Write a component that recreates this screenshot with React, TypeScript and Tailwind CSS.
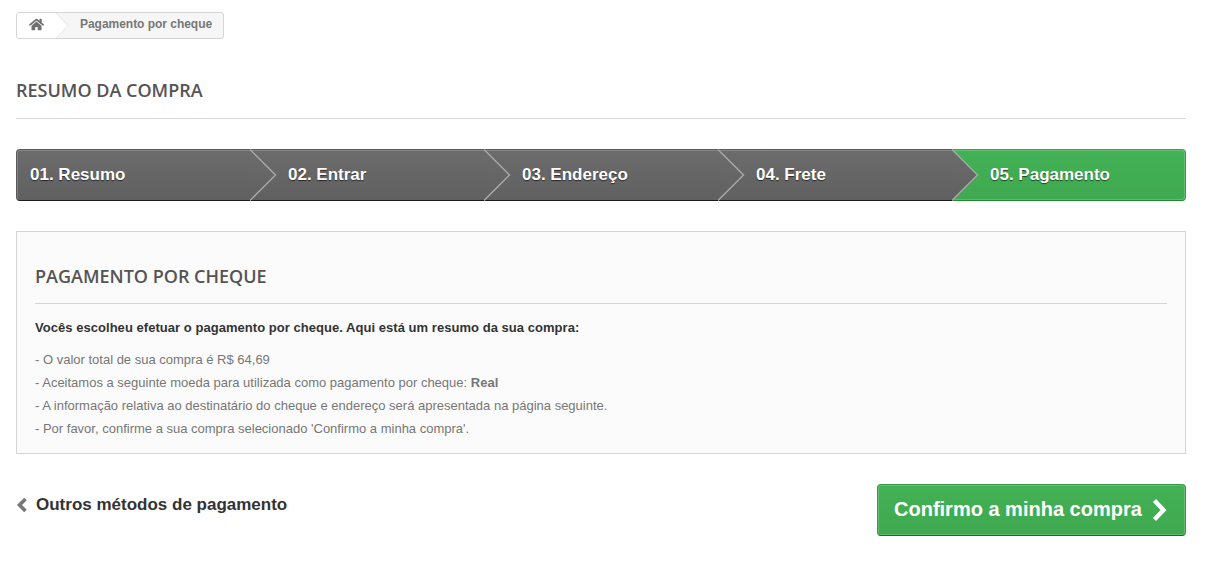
import { FaHome } from "react-icons/fa";

const steps = ["01. Resumo", "02. Entrar", "03. Endereço", "04. Frete", "05. Pagamento"];

function Chevron({ id }: { id: string }) {
  return (
    <svg className="absolute top-0 -right-[27px] z-10" width="27" height="52" viewBox="0 0 27 52">
      <defs>
        <linearGradient id={id} x1="0" y1="0" x2="0" y2="1">
          <stop offset="0" stopColor="#6c6c6c" />
          <stop offset="1" stopColor="#606060" />
        </linearGradient>
      </defs>
      <path d="M0 0 L26 26 L0 52 Z" fill={`url(#${id})`} />
      <path d="M0 0.5 L25.5 26 L0 51.5" fill="none" stroke="#a9a9a9" strokeWidth="1.4" />
    </svg>
  );
}

export default function App() {
  return (
    <div className="h-[562px] w-[1218px] overflow-hidden bg-white pl-4 pr-8 pt-3 font-['Liberation_Sans',Arial,sans-serif]">
      {/* breadcrumb */}
      <div className="relative flex h-[27px] w-[208px] items-center overflow-hidden rounded-[3px] border border-[#d6d4d4] bg-[#f6f6f6] text-xs font-bold text-[#777777]">
        <div className="flex h-full w-[39px] items-center justify-center bg-white pb-[3px] text-[#6f6f6f]">
          <FaHome className="text-[15px]" />
        </div>
        <svg className="absolute left-[38px] top-0" width="16" height="25" viewBox="0 0 16 25">
          <path d="M0 -1 L13 12.5 L0 26 Z" fill="#ffffff" />
          <path d="M0 -1 L13 12.5 L0 26" fill="none" stroke="#e6e6e6" strokeWidth="1" />
        </svg>
        <span className="pb-[3px] pl-[24px] tracking-[-0.03px]">Pagamento por cheque</span>
      </div>

      <h1 className="mt-[39px] border-b border-[#d6d4d4] pb-[16px] font-['Open_Sans',sans-serif] text-lg leading-[24px] font-semibold text-[#555454] uppercase">
        Resumo da compra
      </h1>

      {/* steps */}
      <div className="mt-[30px] flex h-[52px]">
        {steps.map((step, i) => (
          <div
            key={step}
            className={
              i === 4
                ? "relative flex w-[234px] items-center rounded-r-[4px] border-t border-r border-b border-t-[#3f9f4e] border-r-[#3d9a4b] border-b-[#1f8a30] bg-gradient-to-b from-[#43b155] to-[#3fa950] pb-[2px] pl-[38px] shadow-[inset_0_1px_0_rgba(255,255,255,0.18),inset_-1px_0_0_rgba(255,255,255,0.18),inset_0_-1px_0_rgba(255,255,255,0.18)]"
                : i === 0
                  ? "relative flex w-[234px] items-center rounded-l-[4px] border-t border-l border-b border-t-[#5a5a5a] border-l-[#5a5a5a] border-b-[#1c1c1c] bg-gradient-to-b from-[#6c6c6c] to-[#606060] pb-[2px] pl-[13px] shadow-[inset_0_1px_0_rgba(255,255,255,0.18),inset_1px_0_0_rgba(255,255,255,0.18)]"
                  : "relative flex w-[234px] items-center border-t border-b border-t-[#5a5a5a] border-b-[#1c1c1c] bg-gradient-to-b from-[#6c6c6c] to-[#606060] pb-[2px] pl-[38px] shadow-[inset_0_1px_0_rgba(255,255,255,0.18)]"
            }
          >
            <span className="text-[17px] leading-none font-bold text-white [text-shadow:0_1px_1px_rgba(0,0,0,0.6)]">
              {step}
            </span>
            {i < 4 && (
              <div className="absolute -top-px right-0">
                <Chevron id={`step-fill-${i}`} />
              </div>
            )}
          </div>
        ))}
      </div>

      {/* panel */}
      <div className="mt-[30px] h-[223px] border border-[#d6d4d4] bg-[#fbfbfb] px-[18px] pt-[31px]">
        <h2 className="border-b border-[#d6d4d4] pb-[14px] font-['Open_Sans',sans-serif] text-lg leading-[26px] font-semibold text-[#555454] uppercase">
          Pagamento por cheque
        </h2>
        <p className="mt-[14px] text-[13px] leading-[19px] font-bold tracking-[0.04px] text-[#333333]">
          Vocês escolheu efetuar o pagamento por cheque. Aqui está um resumo da sua compra:
        </p>
        <div className="mt-[11px] text-[13px] leading-[23px] text-[#777777]">
          <p>- O valor total de sua compra é R$ 64,69</p>
          <p>
            - Aceitamos a seguinte moeda para utilizada como pagamento por cheque: <b>Real</b>
          </p>
          <p>- A informação relativa ao destinatário do cheque e endereço será apresentada na página seguinte.</p>
          <p>- Por favor, confirme a sua compra selecionado 'Confirmo a minha compra'.</p>
        </div>
      </div>

      {/* actions */}
      <div className="mt-[30px] flex items-start justify-between">
        <a className="mt-[10px] flex items-center text-[17px] leading-[22px] font-bold text-[#333333]">
          <svg className="mr-[8px]" width="12" height="16" viewBox="0 0 12 16">
            <path d="M9.5 2 L3.5 8 L9.5 14" fill="none" stroke="#777777" strokeWidth="3.6" />
          </svg>
          Outros métodos de pagamento
        </a>
        <a className="flex h-[52px] w-[309px] items-center rounded-[4px] border border-[#3a9a49] border-b-[#156d24] bg-gradient-to-b from-[#43b155] to-[#3fa950] pb-[2px] pl-[16px] text-xl font-bold text-white shadow-[inset_0_0_0_1px_rgba(255,255,255,0.18)]">
          Confirmo a minha compra
          <svg className="mt-[2px] ml-[9px]" width="17" height="24" viewBox="0 0 17 24">
            <path d="M3.5 2.5 L12.5 12 L3.5 21.5" fill="none" stroke="#ffffff" strokeWidth="4.4" />
          </svg>
        </a>
      </div>
    </div>
  );
}
